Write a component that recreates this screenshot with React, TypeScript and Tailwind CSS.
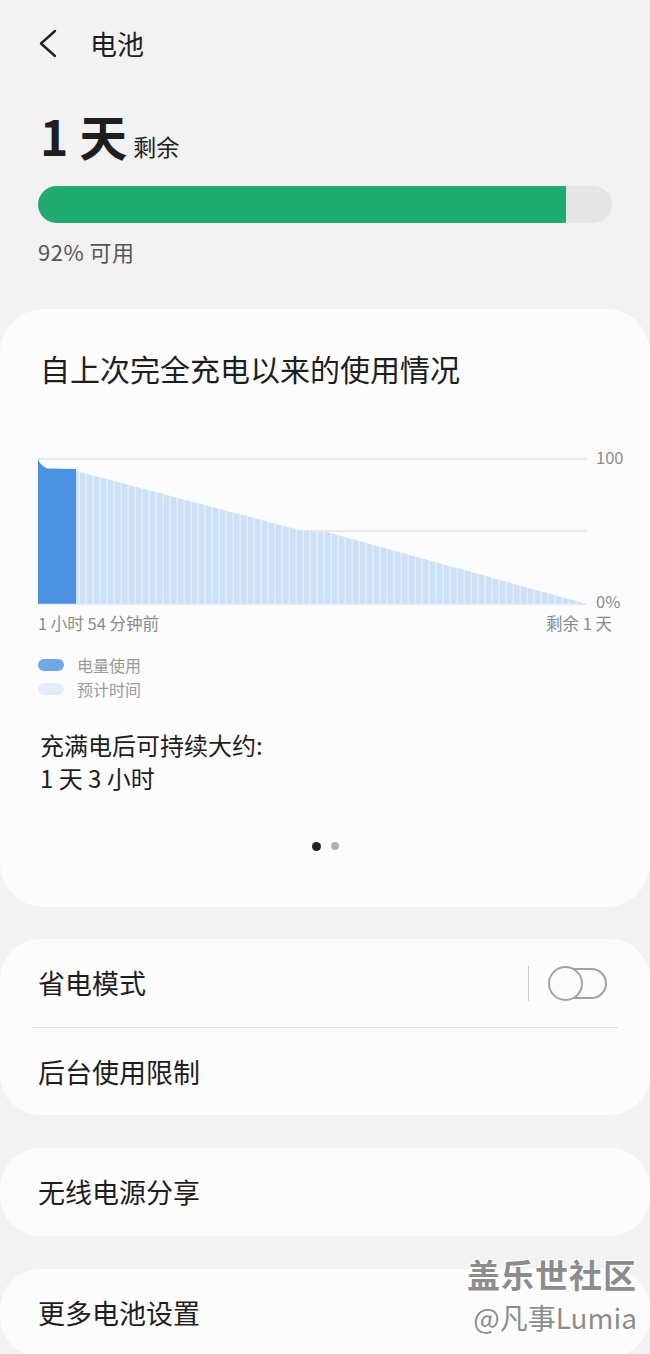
import React from "react";

const font = "font-['Noto_Sans_CJK_SC','Noto_Sans',sans-serif]";

function BackIcon() {
  return (
    <svg width="22" height="32" viewBox="0 0 22 32" fill="none">
      <path d="M17 3 L3 15.5 L17 28" stroke="#222" strokeWidth="2.4" strokeLinecap="round" strokeLinejoin="round" />
    </svg>
  );
}

function UsageChart() {
  // origin: x=38, y=445 on page
  return (
    <div className="flex h-[167px]">
      <svg width="549" height="167" viewBox="0 0 549 167" className="block shrink-0">
        <defs>
          <pattern id="stripes" width="7" height="10" patternUnits="userSpaceOnUse">
            <rect x="0" y="0" width="7" height="10" fill="#e1edfa" />
            <rect x="0" y="0" width="5.4" height="10" fill="#cde1f6" />
          </pattern>
        </defs>
        <line x1="0" y1="14" x2="549" y2="14" stroke="#e3e3e3" strokeWidth="1.5" />
        <line x1="0" y1="86" x2="549" y2="86" stroke="#e3e3e3" strokeWidth="1.5" />
        <polygon points="38,26 265,86 287,86.5 549,159 38,159" fill="url(#stripes)" />
        <polygon points="0,14 2,18 5,21 9,23.5 38,24 38,159 0,159" fill="#4a91e2" />
        <line x1="0" y1="159.5" x2="549" y2="159.5" stroke="#e8eef5" strokeWidth="1.5" />
      </svg>
      <div className="ml-[9px] flex flex-col justify-between pt-[4px] pb-[3px] text-[16.5px] leading-[16px] text-[#8a8a8a]">
        <span>100</span>
        <span>0%</span>
      </div>
    </div>
  );
}

function Toggle() {
  return (
    <div className="relative w-[60px] h-[35px] flex items-center">
      <div className="w-[58px] h-[31px] ml-[1px] rounded-full border-2 border-[#a2a2a2]" />
      <div className="absolute left-0 top-0 w-[35px] h-[35px] rounded-full border-2 border-[#a2a2a2] bg-[#fbfbfb]" />
    </div>
  );
}

function RowCard({ label }: { label: string }) {
  return (
    <div className="bg-[#fcfcfc] rounded-[40px] h-[88px] flex items-center pl-[38px]">
      <span className="text-[27px] leading-[36px] text-[#1e1e1e]">{label}</span>
    </div>
  );
}

export default function App() {
  return (
    <div className={`${font} relative w-[650px] h-[1354px] overflow-hidden bg-[#f2f2f2] text-[#1e1e1e]`}>
      {/* header */}
      <div className="h-[88px] flex items-center pl-[38px]">
        <BackIcon />
        <span className="ml-[30px] text-[27px] leading-[36px]">电池</span>
      </div>

      <div className="px-[38px]">
        <div className="mt-[22px] h-[50px] flex items-baseline">
          <span className="text-[48px] leading-[50px] font-bold pl-[2px]">1 天</span>
          <span className="ml-[6px] text-[23px] leading-[30px]">剩余</span>
        </div>

        <div className="mt-[26px] h-[37px] w-[574px] rounded-full bg-[#e5e5e5] flex overflow-hidden">
          <div className="w-[528px] h-full bg-[#1fab72]" />
        </div>

        <p className="mt-[14px] text-[22px] leading-[28px] tracking-[0.5px] text-[#555]">92% 可用</p>
      </div>

      {/* usage card */}
      <div className="mt-[44px] bg-[#fcfcfc] rounded-[44px] pl-[38px] pr-[38px] pt-[39px] pb-[56px]">
        <p className="text-[30px] leading-[40px] pl-[2px]">自上次完全充电以来的使用情况</p>

        <div className="mt-[57px]">
          <UsageChart />
        </div>
        <div className="mt-[3px] flex justify-between text-[16.5px] leading-[16px] text-[#8a8a8a]">
          <span>1 小时 54 分钟前</span>
          <span>剩余 1 天</span>
        </div>

        <div className="mt-[22px] flex flex-col text-[16px] leading-[24px] text-[#9a9a9a]">
          <div className="flex items-center">
            <span className="w-[26px] h-[12px] rounded-full bg-[#6fa8e7]" />
            <span className="ml-[13px]">电量使用</span>
          </div>
          <div className="flex items-center">
            <span className="w-[26px] h-[12px] rounded-full bg-[#e2edfa]" />
            <span className="ml-[13px]">预计时间</span>
          </div>
        </div>

        <div className="mt-[27px] text-[24px] leading-[33px] pl-[2px]">
          <p>充满电后可持续大约:</p>
          <p>1 天 3 小时</p>
        </div>

        <div className="mt-[47px] flex justify-center items-center gap-[10px] h-[10px]">
          <span className="w-[9px] h-[9px] rounded-full bg-[#222]" />
          <span className="w-[8px] h-[8px] rounded-full bg-[#b0b0b0]" />
        </div>
      </div>

      {/* power saving card */}
      <div className="mt-[32px] bg-[#fcfcfc] rounded-[40px]">
        <div className="h-[88px] flex items-center justify-between pl-[38px] pr-[42px]">
          <span className="text-[27px] leading-[36px]">省电模式</span>
          <div className="flex items-center">
            <span className="w-[1.5px] h-[35px] bg-[#cfcfcf]" />
            <span className="ml-[19px]">
              <Toggle />
            </span>
          </div>
        </div>
        <div className="mx-[32px] h-px bg-[#e0e0e0]" />
        <div className="h-[87px] flex items-center pl-[38px]">
          <span className="text-[27px] leading-[36px]">后台使用限制</span>
        </div>
      </div>

      <div className="mt-[33px]">
        <RowCard label="无线电源分享" />
      </div>
      <div className="mt-[33px]">
        <RowCard label="更多电池设置" />
      </div>

      {/* watermark */}
      <div className="absolute right-[13px] top-[1253px] flex flex-col items-end text-[#8c8c8c] [text-shadow:1px_1px_0_#fff,-1px_-1px_0_#fff,1px_-1px_0_#fff,-1px_1px_0_#fff]">
        <span className="text-[33px] leading-[42px] font-bold tracking-[1px]">盖乐世社区</span>
        <span className="text-[28px] leading-[36px] mt-[4px]">@凡事Lumia</span>
      </div>
    </div>
  );
}
